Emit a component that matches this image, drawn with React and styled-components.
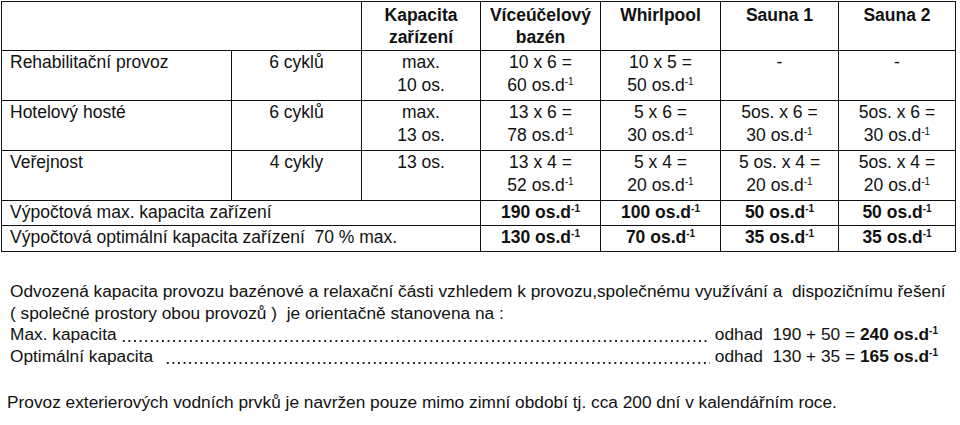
import React from 'react';
import styled, { createGlobalStyle } from 'styled-components';

const Global = createGlobalStyle`
  body {
    margin: 0;
    background: #fff;
    color: #111;
    font-family: "Liberation Sans", Arial, sans-serif;
  }
`;

const Od = ({ n }) => (
  <>
    {n} os.d<Sup>-1</Sup>
  </>
);

const rows = [
  ['Rehabilitační provoz', '6 cyklů', ['max.', '10 os.'], ['10 x 6 =', <Od n="60" />], ['10 x 5 =', <Od n="50" />], ['-'], ['-']],
  ['Hotelový hosté', '6 cyklů', ['max.', '13 os.'], ['13 x 6 =', <Od n="78" />], ['5 x 6 =', <Od n="30" />], ['5os. x 6 =', <Od n="30" />], ['5os. x 6 =', <Od n="30" />]],
  ['Veřejnost', '4 cykly', ['13 os.'], ['13 x 4 =', <Od n="52" />], ['5 x 4 =', <Od n="20" />], ['5 os. x 4 =', <Od n="20" />], ['5os. x 4 =', <Od n="20" />]],
];

const totals = [
  ['Výpočtová max. kapacita zařízení', ['190', '100', '50', '50']],
  ['Výpočtová optimální kapacita zařízení\u00a0 70 % max.', ['130', '70', '35', '35']],
];

function App() {
  return (
    <>
      <Global />
      <Page>
        <Table>
          <colgroup>
            {[230, 130, 119, 120, 120, 118, 117].map((w, i) => (
              <col key={i} style={{ width: w }} />
            ))}
          </colgroup>
          <thead>
            <Row $h={49}>
              <Head colSpan={2}></Head>
              <Head>Kapacita<br />zařízení</Head>
              <Head>Víceúčelový<br />bazén</Head>
              <Head>Whirlpool</Head>
              <Head>Sauna 1</Head>
              <Head>Sauna 2</Head>
            </Row>
          </thead>
          <tbody>
            {rows.map((r, i) => (
              <Row key={i} $h={50}>
                <Cell $left>{r[0]}</Cell>
                <Cell>{r[1]}</Cell>
                {r.slice(2).map((lines, j) => (
                  <Cell key={j}>
                    {lines.map((l, k) => (
                      <React.Fragment key={k}>
                        {k > 0 && <br />}
                        {l}
                      </React.Fragment>
                    ))}
                  </Cell>
                ))}
              </Row>
            ))}
            {totals.map(([label, vals], i) => (
              <Row key={label} $h={i === 0 ? 25 : 26}>
                <Cell $left colSpan={3}>{label}</Cell>
                {vals.map((v, j) => (
                  <Cell key={j} $bold>
                    <Od n={v} />
                  </Cell>
                ))}
              </Row>
            ))}
          </tbody>
        </Table>

        <Notes>
          <Line>
            Odvozená kapacita provozu bazénové a relaxační části vzhledem k provozu,společnému využívání a&nbsp; dispozičnímu řešení
          </Line>
          <Line>( společné prostory obou provozů )&nbsp; je orientačně stanovena na :</Line>
          <Leader>
            <span>Max. kapacita</span>
            <Dots $start={4} />
            <span>
              odhad&nbsp; 190 + 50 = <B><Od n="240" /></B>
            </span>
          </Leader>
          <Leader>
            <span>Optimální kapacita</span>
            <Dots $start={12} />
            <span>
              odhad&nbsp; 130 + 35 = <B><Od n="165" /></B>
            </span>
          </Leader>
          <Final>
            Provoz exterierových vodních prvků je navržen pouze mimo zimní období tj. cca 200 dní v kalendářním roce.
          </Final>
        </Notes>
      </Page>
    </>
  );
}

const Page = styled.div`
  width: 960px;
  height: 425px;
  overflow: hidden;
  padding: 1px 0 0 1px;
  box-sizing: border-box;
  font-size: 17.5px;
`;

const Table = styled.table`
  border-collapse: collapse;
  table-layout: fixed;
  width: 954px;
  border: 1px solid #111;
`;

const Row = styled.tr`
  height: ${p => p.$h}px;
`;

const Head = styled.th`
  border: 1px solid #111;
  padding: 2px 2px 0;
  font-weight: 700;
  line-height: 22px;
  text-align: center;
  vertical-align: top;
`;

const Cell = styled.td`
  border: 1px solid #111;
  padding: 0 2px 0 ${p => (p.$left ? '8px' : '2px')};
  font-weight: ${p => (p.$bold ? 700 : 400)};
  line-height: 23px;
  text-align: ${p => (p.$left ? 'left' : 'center')};
  vertical-align: top;
  white-space: nowrap;
`;

const Sup = styled.sup`
  font-size: 10px;
  line-height: 0;
  vertical-align: 6px;
`;

const Notes = styled.div`
  padding: 29px 0 0 9px;
  width: 928px;
  font-size: 17.3px;
  line-height: 21.5px;
`;

const Line = styled.div`
  white-space: nowrap;
`;

const Leader = styled.div`
  display: flex;
  white-space: nowrap;
`;

const Dots = styled.span`
  flex: 1;
  margin: 0 5px 0 ${p => p.$start}px;
  background-image: radial-gradient(circle, #222 0.9px, transparent 1.2px);
  background-size: 5.6px 4px;
  background-repeat: repeat-x;
  background-position: 0 15px;
`;

const B = styled.b`
  font-weight: 700;
`;

const Final = styled.div`
  margin-top: 25px;
  margin-left: -3px;
  white-space: nowrap;
`;

export default App;
